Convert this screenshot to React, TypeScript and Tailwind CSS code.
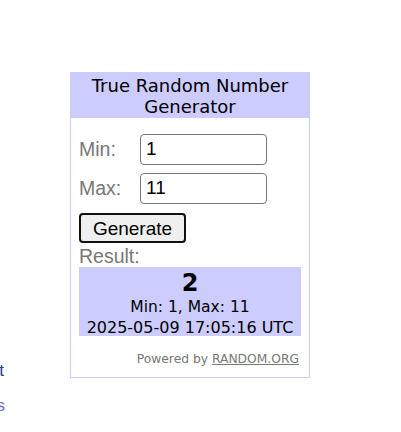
import React from 'react';

const verdana = { fontFamily: '"DejaVu Sans", Verdana, sans-serif' };
const arial = { fontFamily: '"Liberation Sans", Arial, sans-serif' };

function Field({ label, value }: { label: string; value: string }) {
  return (
    <div className="flex items-center h-[31px]">
      <span className="w-[61px] text-[19.5px] text-[#777]" style={arial}>{label}</span>
      <div
        className="w-[127px] h-[31px] border border-[#767676] rounded-[4px] bg-white flex items-center px-[5px] text-[19px] text-black"
        style={arial}
      >
        {value}
      </div>
    </div>
  );
}

export default function App() {
  return (
    <div className="relative w-[401px] h-[432px] bg-white overflow-hidden">
      {/* page links cut by the left edge */}
      <div className="absolute left-[-56px] top-[361px] w-[60px] text-right text-[17px] leading-[20px] text-[#1d3e9e]" style={arial}>
        Edit
      </div>
      <div className="absolute left-[-56px] top-[396px] w-[61px] text-right text-[17px] leading-[20px] text-[#6b6be0]" style={arial}>
        Links
      </div>

      <div className="ml-[70px] pt-[72px]">
        <div className="w-[240px] border border-[#ccccff] bg-white">
          <div className="bg-[#ccccff] h-[45px] flex items-center justify-center text-center text-[18px] leading-[21px] text-black" style={verdana}>
            True Random Number<br />Generator
          </div>
          <div className="px-[8px] pt-[16px]">
            <div className="flex flex-col gap-[8px]">
              <Field label="Min:" value="1" />
              <Field label="Max:" value="11" />
            </div>
            <button
              className="mt-[9px] w-[107px] h-[30px] border-2 border-[#111] rounded-[4px] bg-[#efefef] text-[19px] text-black flex items-center justify-center pt-[2px]"
              style={arial}
            >
              Generate
            </button>
            <div className="h-[24px] flex items-center pt-[4px] text-[19.5px] text-[#777]" style={arial}>Result:</div>
            <div className="bg-[#ccccff] h-[69px] flex flex-col items-center text-black" style={verdana}>
              <div className="text-[24px] leading-[28px] font-bold pt-[2px]">2</div>
              <div className="text-[15.5px] leading-[20px]">Min: 1, Max: 11</div>
              <div className="text-[16px] leading-[21px]">2025-05-09 17:05:16 UTC</div>
            </div>
            <div className="mt-[14px] pb-[9px] pr-[2px] text-right text-[12.3px] leading-[18px] text-[#777]" style={verdana}>
              Powered by <span className="underline">RANDOM.ORG</span>
            </div>
          </div>
        </div>
      </div>
    </div>
  );
}
